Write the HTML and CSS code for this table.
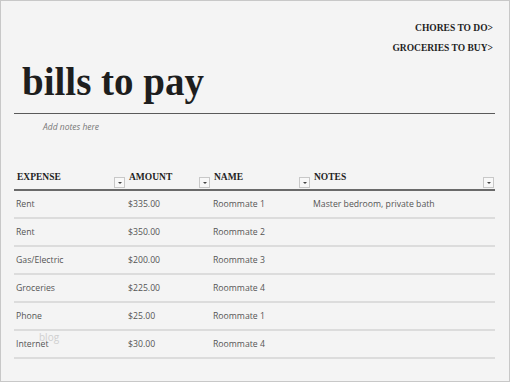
FILE: index.html
```html
<!DOCTYPE html>
<html lang="en">
<head>
  <meta charset="UTF-8" />
  <title>Bills to pay</title>
  <link rel="stylesheet" href="styles.css">
</head>
<body>
  <div class="sheet">
    <nav class="links">
      <a href="#">CHORES TO DO&gt;</a>
      <a href="#">GROCERIES TO BUY&gt;</a>
    </nav>

    <h1 class="title">bills to pay</h1>
    <p class="notes">Add notes here</p>

    <table class="bills">
      <thead>
        <tr>
          <th class="c-expense">EXPENSE<span class="filter"></span></th>
          <th class="c-amount">AMOUNT<span class="filter"></span></th>
          <th class="c-name">NAME<span class="filter"></span></th>
          <th class="c-notes">NOTES<span class="filter"></span></th>
        </tr>
      </thead>
      <tbody>
        <tr><td>Rent</td><td>$335.00</td><td>Roommate 1</td><td>Master bedroom, private bath</td></tr>
        <tr><td>Rent</td><td>$350.00</td><td>Roommate 2</td><td></td></tr>
        <tr><td>Gas/Electric</td><td>$200.00</td><td>Roommate 3</td><td></td></tr>
        <tr><td>Groceries</td><td>$225.00</td><td>Roommate 4</td><td></td></tr>
        <tr><td>Phone</td><td>$25.00</td><td>Roommate 1</td><td></td></tr>
        <tr><td>Internet<span class="mark">blog</span></td><td>$30.00</td><td>Roommate 4</td><td></td></tr>
      </tbody>
    </table>
  </div>
</body>
</html>
```

FILE: styles.css
```css
* { margin: 0; padding: 0; box-sizing: border-box; }

body {
  background: #f4f4f4;
  font-family: "Open Sans", "Liberation Sans", sans-serif;
  color: #555;
}

.sheet {
  width: 510px; height: 382px;
  border: 1px solid #c8c8c8;
  background: #f4f4f4;
  padding: 0 14px 0 13px;
}

.links {
  display: flex; flex-direction: column; align-items: flex-end;
  gap: 6px;
  padding: 20px 2px 0 0;
}
.links a {
  font-family: "Liberation Serif", serif;
  font-weight: bold;
  font-size: 9.5px;
  line-height: 14px;
  color: #1e1e1e;
  text-decoration: none;
}

.title {
  font-family: "Liberation Serif", serif;
  font-weight: bold;
  font-size: 39px;
  line-height: 40px;
  color: #1e1e1e;
  padding: 7px 0 11px 8px;
  border-bottom: 1.5px solid #5a5a5a;
}

.notes {
  font-size: 8.5px;
  font-style: italic;
  color: #777;
  padding: 7px 0 0 29px;
  height: 54px;
}

.bills {
  width: 100%;
  border-collapse: collapse;
  table-layout: fixed;
}

.bills th {
  position: relative;
  text-align: left;
  font-family: "Liberation Serif", serif;
  font-weight: bold;
  font-size: 9.5px;
  color: #1e1e1e;
  padding: 0 0 7px 3px;
  height: 22px;
  vertical-align: bottom;
  border-bottom: 2px solid #6a6a6a;
}
.c-expense { width: 112px; }
.c-amount { width: 85px; }
.c-name { width: 100px; }

.filter {
  position: absolute;
  right: 1px; bottom: 1px;
  width: 11px; height: 11px;
  border: 1px solid #c8c8c8;
  background: #f8f8f8;
}
.filter::after {
  content: "";
  position: absolute; left: 3px; top: 4px;
  border-left: 2px solid transparent;
  border-right: 2px solid transparent;
  border-top: 2px solid #444;
}

.bills td {
  font-size: 8.7px;
  color: #555;
  height: 28px;
  padding: 0 0 0 2px;
  border-bottom: 2px solid #dcdcdc;
  vertical-align: middle;
  position: relative;
}

.mark {
  position: absolute; left: 25px; top: -1px;
  font-size: 10px;
  color: #cfcfcf;
}
```
